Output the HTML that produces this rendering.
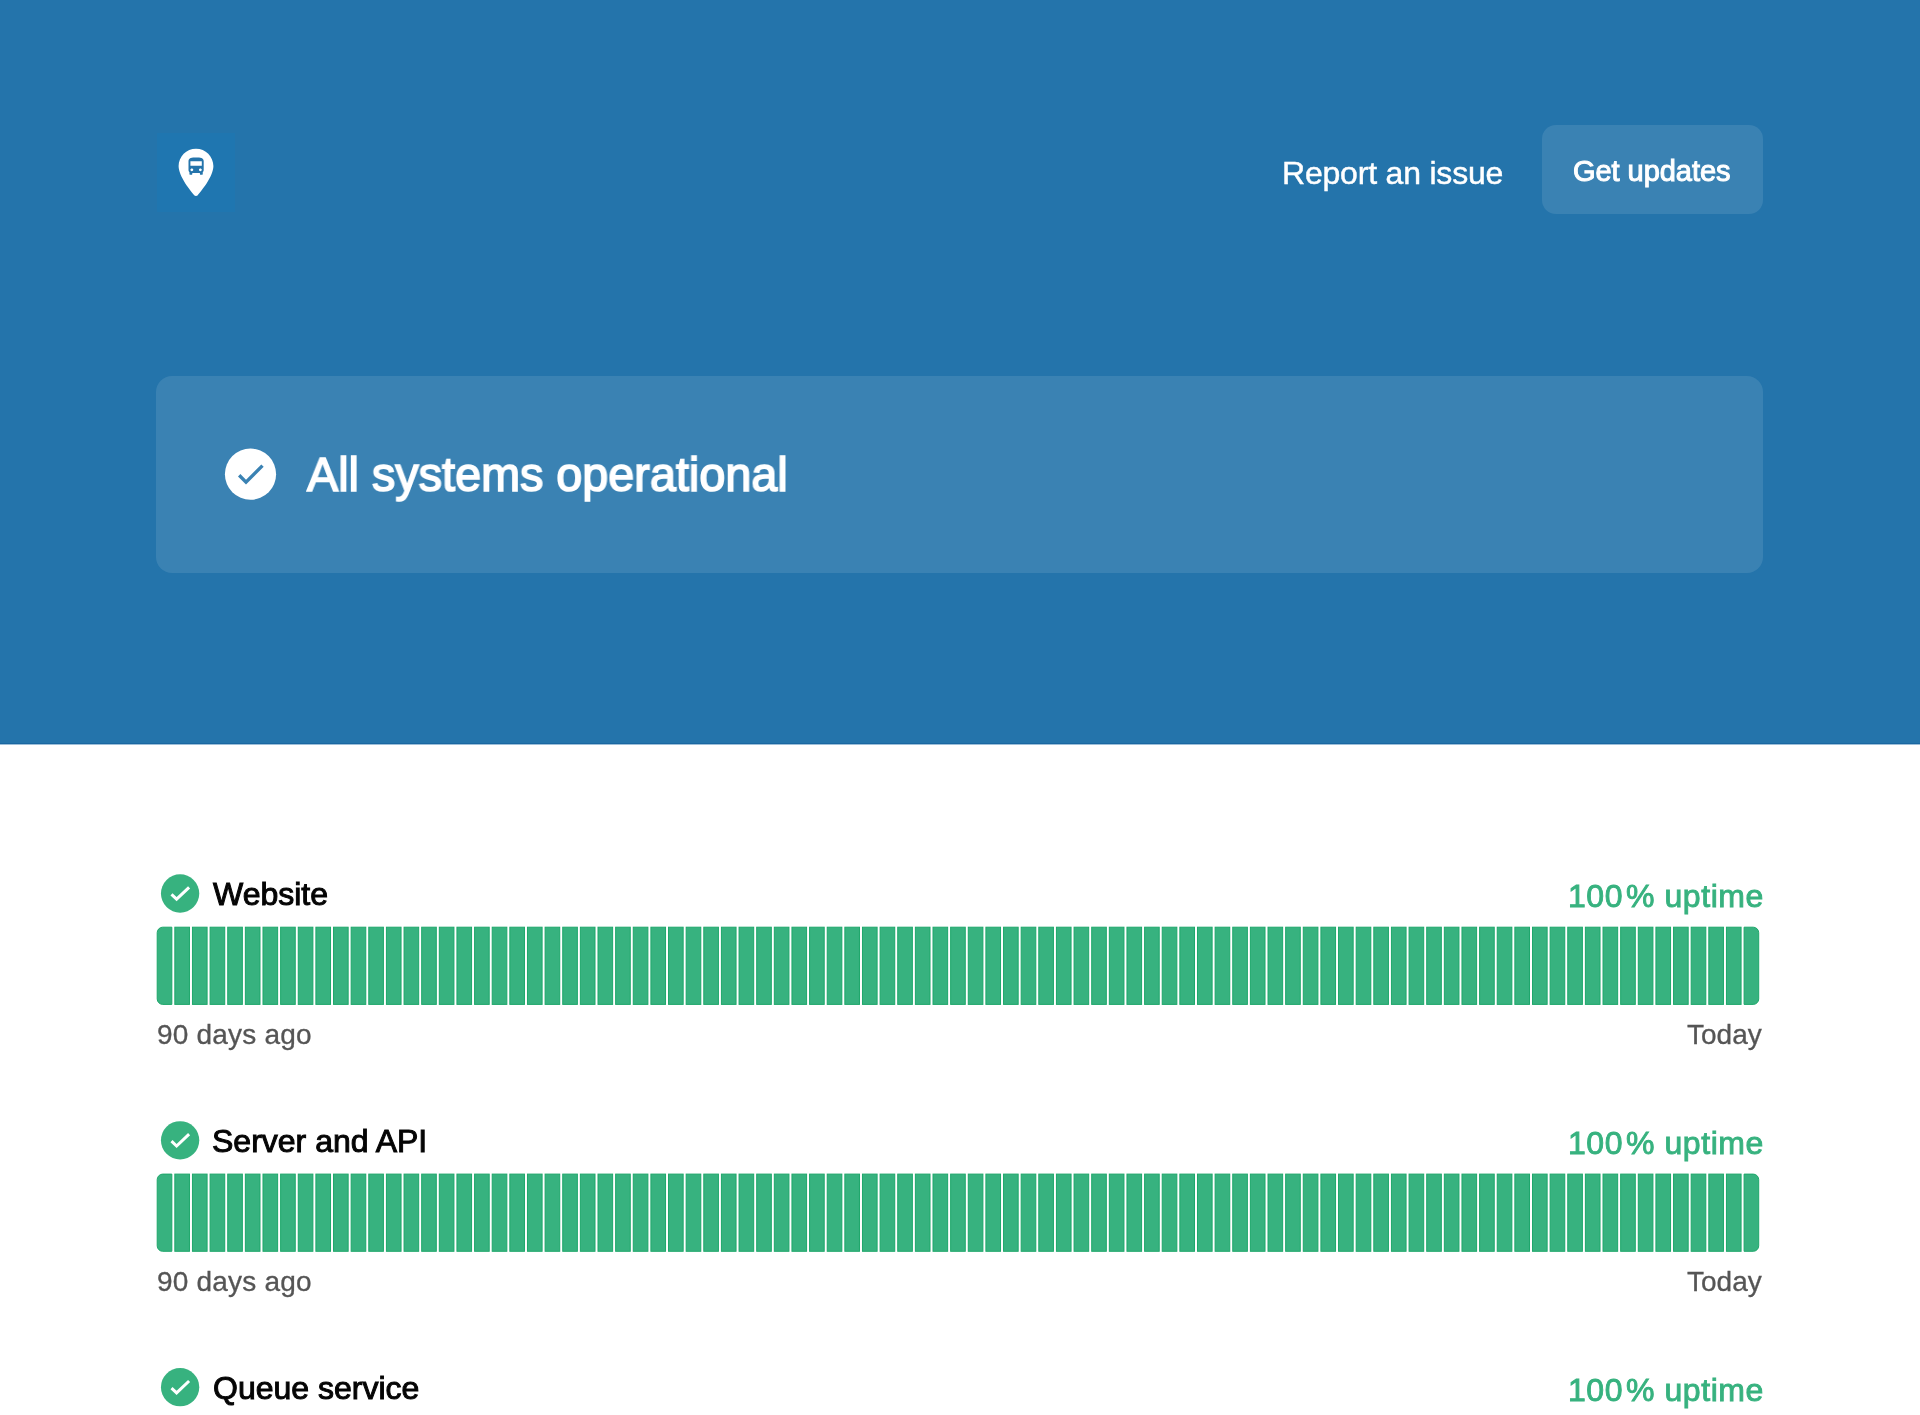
<!DOCTYPE html>
<html><head><meta charset="utf-8">
<style>
html,body{margin:0;padding:0;}
body{width:1920px;height:1415px;overflow:hidden;background:#fff;position:relative;font-family:"Liberation Sans",sans-serif;}
.hdr{position:absolute;left:0;top:0;width:1920px;height:743px;background:#2474ab;border-bottom:1px solid #1a67a1;}
.hdr2{position:absolute;left:0;top:744px;width:1920px;height:1px;background:#9dbfd9;}
.logo{position:absolute;left:157px;top:133px;width:78px;height:79px;background:#1f76b0;}
.btn{position:absolute;left:1542px;top:125.4px;width:221.3px;height:88.4px;border-radius:14px;background:rgba(255,255,255,0.1);}
.card{position:absolute;left:156.2px;top:376.2px;width:1607.3px;height:196.4px;border-radius:16px;background:rgba(255,255,255,0.1);}
.t{position:absolute;white-space:nowrap;line-height:1;will-change:transform;}
.nav{font-size:32px;letter-spacing:-0.2px;color:#fff;-webkit-text-stroke:0.45px #fff;}
.gu{font-size:29px;letter-spacing:-0.05px;color:#fff;-webkit-text-stroke:1.0px #fff;}
.hero{font-size:49px;letter-spacing:0px;transform:scaleX(0.954);transform-origin:0 0;color:#fff;-webkit-text-stroke:1.7px #fff;}
.name{font-size:32px;color:#050505;-webkit-text-stroke:1.0px #050505;}
.up{font-size:32px;letter-spacing:0.55px;color:#37b27f;-webkit-text-stroke:0.9px #37b27f;}
.pc{margin-left:3px;}
.lab{font-size:28px;color:#555;-webkit-text-stroke:0.3px #555;}
.lab1{letter-spacing:0.2px;}
svg{position:absolute;left:0;top:0;}
</style></head><body>
<div class="hdr"></div><div class="hdr2"></div>
<div class="logo"></div>
<svg width="1920" height="1415" viewBox="0 0 1920 1415">
  <path fill="#fff" d="M196 148.7c-9.6 0-17.4 7.8-17.4 17.4c0 10.5 12.5 25.5 15.6 29.1c0.9 1.1 2.6 1.1 3.6 0c3.1-3.6 15.6-18.6 15.6-29.1c0-9.6-7.8-17.4-17.4-17.4z"/>
  <g transform="translate(184.7,155.8) scale(0.95,0.905)" fill="#2474ab">
    <path d="M4 16c0 .88.39 1.670 1 2.22V20c0 .55.45 1 1 1h1c.55 0 1-.45 1-1v-1h8v1c0 .55.45 1 1 1h1c.55 0 1-.45 1-1v-1.78c.61-.55 1-1.34 1-2.22V6c0-3.5-3.58-4-8-4s-8 .5-8 4v10zm3.5 1c-.83 0-1.5-.67-1.5-1.5S6.67 14 7.5 14s1.5.67 1.5 1.5S8.33 17 7.5 17zm9 0c-.83 0-1.5-.67-1.5-1.5s.67-1.5 1.5-1.5 1.5.67 1.5 1.5-.67 1.5-1.5 1.5zm1.5-6H6V6h12v5z"/>
  </g>
</svg>
<div class="btn"></div>
<div class="card"></div>
<svg width="1920" height="1415" viewBox="0 0 1920 1415">
  <defs>
    <g id="bars2" fill="#37b27f" stroke="#1ea76b" stroke-width="1"><path d="M6.70 0.5H15.83V77.7H6.70A5.5 5.5 0 0 1 1.20 72.2V6.0A5.5 5.5 0 0 1 6.70 0.5Z"/><rect x="18.83" y="0.5" width="14.63" height="77.2"/><rect x="36.46" y="0.5" width="14.63" height="77.2"/><rect x="54.10" y="0.5" width="14.63" height="77.2"/><rect x="71.73" y="0.5" width="14.63" height="77.2"/><rect x="89.36" y="0.5" width="14.63" height="77.2"/><rect x="106.99" y="0.5" width="14.63" height="77.2"/><rect x="124.62" y="0.5" width="14.63" height="77.2"/><rect x="142.26" y="0.5" width="14.63" height="77.2"/><rect x="159.89" y="0.5" width="14.63" height="77.2"/><rect x="177.52" y="0.5" width="14.63" height="77.2"/><rect x="195.15" y="0.5" width="14.63" height="77.2"/><rect x="212.78" y="0.5" width="14.63" height="77.2"/><rect x="230.42" y="0.5" width="14.63" height="77.2"/><rect x="248.05" y="0.5" width="14.63" height="77.2"/><rect x="265.68" y="0.5" width="14.63" height="77.2"/><rect x="283.31" y="0.5" width="14.63" height="77.2"/><rect x="300.94" y="0.5" width="14.63" height="77.2"/><rect x="318.58" y="0.5" width="14.63" height="77.2"/><rect x="336.21" y="0.5" width="14.63" height="77.2"/><rect x="353.84" y="0.5" width="14.63" height="77.2"/><rect x="371.47" y="0.5" width="14.63" height="77.2"/><rect x="389.10" y="0.5" width="14.63" height="77.2"/><rect x="406.74" y="0.5" width="14.63" height="77.2"/><rect x="424.37" y="0.5" width="14.63" height="77.2"/><rect x="442.00" y="0.5" width="14.63" height="77.2"/><rect x="459.63" y="0.5" width="14.63" height="77.2"/><rect x="477.26" y="0.5" width="14.63" height="77.2"/><rect x="494.90" y="0.5" width="14.63" height="77.2"/><rect x="512.53" y="0.5" width="14.63" height="77.2"/><rect x="530.16" y="0.5" width="14.63" height="77.2"/><rect x="547.79" y="0.5" width="14.63" height="77.2"/><rect x="565.42" y="0.5" width="14.63" height="77.2"/><rect x="583.06" y="0.5" width="14.63" height="77.2"/><rect x="600.69" y="0.5" width="14.63" height="77.2"/><rect x="618.32" y="0.5" width="14.63" height="77.2"/><rect x="635.95" y="0.5" width="14.63" height="77.2"/><rect x="653.58" y="0.5" width="14.63" height="77.2"/><rect x="671.22" y="0.5" width="14.63" height="77.2"/><rect x="688.85" y="0.5" width="14.63" height="77.2"/><rect x="706.48" y="0.5" width="14.63" height="77.2"/><rect x="724.11" y="0.5" width="14.63" height="77.2"/><rect x="741.74" y="0.5" width="14.63" height="77.2"/><rect x="759.38" y="0.5" width="14.63" height="77.2"/><rect x="777.01" y="0.5" width="14.63" height="77.2"/><rect x="794.64" y="0.5" width="14.63" height="77.2"/><rect x="812.27" y="0.5" width="14.63" height="77.2"/><rect x="829.90" y="0.5" width="14.63" height="77.2"/><rect x="847.54" y="0.5" width="14.63" height="77.2"/><rect x="865.17" y="0.5" width="14.63" height="77.2"/><rect x="882.80" y="0.5" width="14.63" height="77.2"/><rect x="900.43" y="0.5" width="14.63" height="77.2"/><rect x="918.06" y="0.5" width="14.63" height="77.2"/><rect x="935.70" y="0.5" width="14.63" height="77.2"/><rect x="953.33" y="0.5" width="14.63" height="77.2"/><rect x="970.96" y="0.5" width="14.63" height="77.2"/><rect x="988.59" y="0.5" width="14.63" height="77.2"/><rect x="1006.22" y="0.5" width="14.63" height="77.2"/><rect x="1023.86" y="0.5" width="14.63" height="77.2"/><rect x="1041.49" y="0.5" width="14.63" height="77.2"/><rect x="1059.12" y="0.5" width="14.63" height="77.2"/><rect x="1076.75" y="0.5" width="14.63" height="77.2"/><rect x="1094.38" y="0.5" width="14.63" height="77.2"/><rect x="1112.02" y="0.5" width="14.63" height="77.2"/><rect x="1129.65" y="0.5" width="14.63" height="77.2"/><rect x="1147.28" y="0.5" width="14.63" height="77.2"/><rect x="1164.91" y="0.5" width="14.63" height="77.2"/><rect x="1182.54" y="0.5" width="14.63" height="77.2"/><rect x="1200.18" y="0.5" width="14.63" height="77.2"/><rect x="1217.81" y="0.5" width="14.63" height="77.2"/><rect x="1235.44" y="0.5" width="14.63" height="77.2"/><rect x="1253.07" y="0.5" width="14.63" height="77.2"/><rect x="1270.70" y="0.5" width="14.63" height="77.2"/><rect x="1288.34" y="0.5" width="14.63" height="77.2"/><rect x="1305.97" y="0.5" width="14.63" height="77.2"/><rect x="1323.60" y="0.5" width="14.63" height="77.2"/><rect x="1341.23" y="0.5" width="14.63" height="77.2"/><rect x="1358.86" y="0.5" width="14.63" height="77.2"/><rect x="1376.50" y="0.5" width="14.63" height="77.2"/><rect x="1394.13" y="0.5" width="14.63" height="77.2"/><rect x="1411.76" y="0.5" width="14.63" height="77.2"/><rect x="1429.39" y="0.5" width="14.63" height="77.2"/><rect x="1447.02" y="0.5" width="14.63" height="77.2"/><rect x="1464.66" y="0.5" width="14.63" height="77.2"/><rect x="1482.29" y="0.5" width="14.63" height="77.2"/><rect x="1499.92" y="0.5" width="14.63" height="77.2"/><rect x="1517.55" y="0.5" width="14.63" height="77.2"/><rect x="1535.18" y="0.5" width="14.63" height="77.2"/><rect x="1552.82" y="0.5" width="14.63" height="77.2"/><rect x="1570.45" y="0.5" width="14.63" height="77.2"/><path d="M1588.08 0.5H1597.21A5.5 5.5 0 0 1 1602.71 6.0V72.2A5.5 5.5 0 0 1 1597.21 77.7H1588.08Z"/></g>
    <clipPath id="bc2"><rect x="0" y="0" width="1603.5" height="78.2" rx="12" ry="12"/></clipPath>
  </defs>
  <circle cx="250.5" cy="474.2" r="25.6" fill="#fff"/>
  <path d="M239.2 475.3L246 482.1L262.5 465.6" fill="none" stroke="#3a82b3" stroke-width="3.4"/>
  <g id="ic">
    <circle cx="180.1" cy="893.5" r="19.15" fill="#37b27f"/>
    <path d="M171.5 894.4L176.6 899.2L189.1 887.3" fill="none" stroke="#fff" stroke-width="3.0"/>
  </g>
  <use href="#ic" y="246.8"/>
  <use href="#ic" y="493.7"/>
  <g transform="translate(156,926.7)"><use href="#bars2"/></g>
  <g transform="translate(156,1173.6)"><use href="#bars2"/></g>
</svg>
<div class="t nav" style="left:1282px;top:157.3px;">Report an issue</div>
<div class="t gu" style="left:1573px;top:156.6px;">Get updates</div>
<div class="t hero" style="left:306.8px;top:449.6px;">All systems operational</div>
<div class="t name" style="left:212.5px;top:878px;">Website</div>
<div class="t up" style="left:1567.7px;top:880.2px;">100<span class="pc">%</span> uptime</div>
<div class="t lab lab1" style="left:156.8px;top:1021px;">90 days ago</div>
<div class="t lab" style="left:1687.4px;top:1020.7px;">Today</div>
<div class="t name" style="left:212px;top:1125px;">Server and API</div>
<div class="t up" style="left:1567.7px;top:1127px;">100<span class="pc">%</span> uptime</div>
<div class="t lab lab1" style="left:156.8px;top:1268px;">90 days ago</div>
<div class="t lab" style="left:1687.4px;top:1267.7px;">Today</div>
<div class="t name" style="left:212.5px;top:1372px;">Queue service</div>
<div class="t up" style="left:1567.7px;top:1374px;">100<span class="pc">%</span> uptime</div>
</body></html>
